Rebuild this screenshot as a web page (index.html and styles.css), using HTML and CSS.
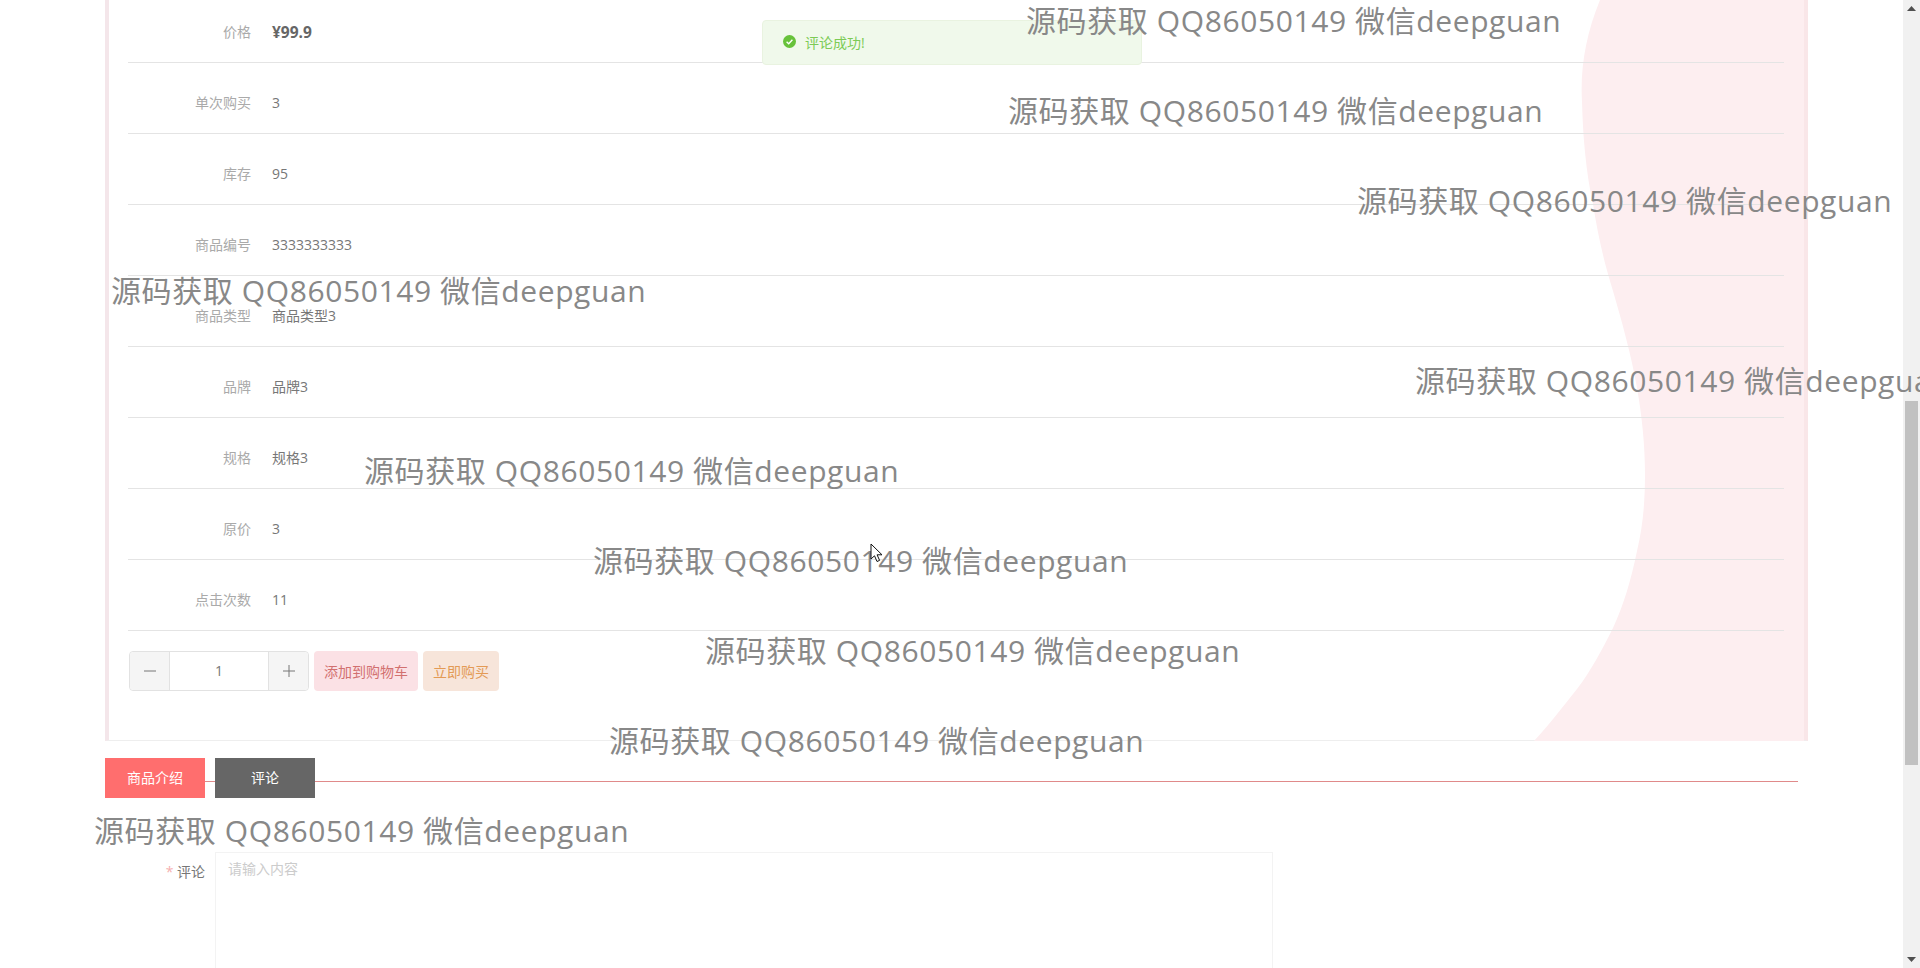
FILE: index.html
```html
<!DOCTYPE html>
<html lang="en">
<head>
    <meta charset="UTF-8">
    <title>商品详情</title>
    <link rel="stylesheet" href="styles.css">
</head>
<body>
    <div class="viewport">
        <main class="page">
            <section class="card">
                <svg class="blob" width="276" height="741" viewBox="0 0 276 741">
                    <path d="M72 0C58 34 52 68 54 102C55 138 58 172 65 204C70 236 76 262 85 291C94 322 103 354 109 388C114 416 117 446 117 474C117 502 115 526 109 551C103 580 96 604 85 628C74 650 62 672 49 689C34 708 20 726 6 741L276 741L276 0Z" fill="#fdeef0"/>
                </svg>
                <div class="row row-first"><span class="row-label">价格</span><span class="row-price">¥99.9</span></div>
                <div class="row"><span class="row-label">单次购买</span><span class="row-value">3</span></div>
                <div class="row"><span class="row-label">库存</span><span class="row-value">95</span></div>
                <div class="row"><span class="row-label">商品编号</span><span class="row-value">3333333333</span></div>
                <div class="row"><span class="row-label">商品类型</span><span class="row-value">商品类型3</span></div>
                <div class="row"><span class="row-label">品牌</span><span class="row-value">品牌3</span></div>
                <div class="row"><span class="row-label">规格</span><span class="row-value">规格3</span></div>
                <div class="row"><span class="row-label">原价</span><span class="row-value">3</span></div>
                <div class="row"><span class="row-label">点击次数</span><span class="row-value">11</span></div>
                <div class="actions">
                    <div class="stepper">
                        <span class="stepper-btn">
                            <svg width="14" height="14" viewBox="0 0 14 14"><path d="M1 7H13" stroke="#777" stroke-width="1"/></svg>
                        </span>
                        <span class="stepper-num">1</span>
                        <span class="stepper-btn stepper-plus">
                            <svg width="14" height="14" viewBox="0 0 14 14"><path d="M1 7H13M7 1V13" stroke="#777" stroke-width="1"/></svg>
                        </span>
                    </div>
                    <button class="btn btn-cart">添加到购物车</button>
                    <button class="btn btn-buy">立即购买</button>
                </div>
            </section>

            <nav class="tabs">
                <span class="tab tab-active">商品介绍</span>
                <span class="tab">评论</span>
            </nav>

            <form class="comment-form">
                <label class="comment-label"><span class="required">*</span> 评论</label>
                <textarea class="comment-input" placeholder="请输入内容"></textarea>
            </form>
        </main>

        <div class="scrollbar">
            <span class="scroll-arrow"><svg width="9" height="5" viewBox="0 0 9 5"><path d="M4.5 0L9 5H0Z" fill="#505050"/></svg></span>
            <span class="scroll-thumb"></span>
            <span class="scroll-arrow scroll-arrow-down"><svg width="9" height="5" viewBox="0 0 9 5"><path d="M0 0H9L4.5 5Z" fill="#505050"/></svg></span>
        </div>
    </div>

    <div class="toast">
        <svg width="13" height="13" viewBox="0 0 13 13">
            <circle cx="6.5" cy="6.5" r="6.5" fill="#67c23a"/>
            <path d="M3.6 6.7L5.7 8.7L9.4 4.7" fill="none" stroke="#fff" stroke-width="1.4"/>
        </svg>
        <span>评论成功!</span>
    </div>

    <span class="wm wm-1">源码获取 QQ86050149 微信deepguan</span>
    <span class="wm wm-2">源码获取 QQ86050149 微信deepguan</span>
    <span class="wm wm-3">源码获取 QQ86050149 微信deepguan</span>
    <span class="wm wm-4">源码获取 QQ86050149 微信deepguan</span>
    <span class="wm wm-5">源码获取 QQ86050149 微信deepguan</span>
    <span class="wm wm-6">源码获取 QQ86050149 微信deepguan</span>
    <span class="wm wm-7">源码获取 QQ86050149 微信deepguan</span>
    <span class="wm wm-8">源码获取 QQ86050149 微信deepguan</span>
    <span class="wm wm-9">源码获取 QQ86050149 微信deepguan</span>
    <span class="wm wm-10">源码获取 QQ86050149 微信deepguan</span>

    <svg class="cursor" width="13" height="20" viewBox="0 0 13 20">
        <path d="M1 1V16L4.5 12.8L7 18.5L9.6 17.4L7.1 11.8H12Z" fill="#fff" stroke="#111" stroke-width="1"/>
    </svg>
</body>
</html>
```

FILE: styles.css
```css
html, body {
    margin: 0;
    padding: 0;
    height: 100%;
    overflow: hidden;
    background-color: #fff;
    font-family: "Open Sans", "Noto Sans CJK SC", sans-serif;
    font-size: 14px;
    color: #666;
}

.viewport {
    display: flex;
    height: 968px;
    overflow: hidden;
}

.page {
    flex: 1;
    min-width: 0;
    padding-left: 105px;
}

/* product card */
.card {
    position: relative;
    width: 1703px;
    height: 741px;
    box-sizing: border-box;
    padding: 0 20px 0 19px;
    border-left: 4px solid #f4e6ea;
    border-right: 4px solid #f9e6e8;
    border-bottom: 1px solid #eee;
    background-color: #fff;
}

.blob {
    position: absolute;
    top: 0;
    right: 0;
}

.row {
    position: relative;
    display: flex;
    align-items: flex-end;
    gap: 21px;
    height: 71px;
    box-sizing: border-box;
    padding-bottom: 20px;
    border-bottom: 1px solid #e4e4e4;
    line-height: 20px;
}

.row-first {
    height: 63px;
}

.row-label {
    width: 123px;
    text-align: right;
    color: #aaa;
}

.row-value {
    color: #777;
}

.row-price {
    color: #666;
    font-size: 15.5px;
    font-weight: 700;
}

.actions {
    position: relative;
    display: flex;
    gap: 5px;
    margin: 20px 0 0 1px;
}

.stepper {
    display: flex;
    width: 180px;
    height: 40px;
    box-sizing: border-box;
    border: 1px solid #e2e2e2;
    border-radius: 4px;
    background-color: #fff;
}

.stepper-btn {
    display: flex;
    align-items: center;
    justify-content: center;
    width: 40px;
    box-sizing: border-box;
    background-color: #f5f5f5;
    border-right: 1px solid #e2e2e2;
    border-radius: 4px 0 0 4px;
}

.stepper-plus {
    border-right: none;
    border-left: 1px solid #e2e2e2;
    border-radius: 0 4px 4px 0;
}

.stepper-num {
    flex: 1;
    text-align: center;
    line-height: 38px;
    color: #777;
}

.btn {
    height: 40px;
    padding: 0;
    border: none;
    border-radius: 4px;
    font-family: inherit;
    font-size: 14px;
    white-space: nowrap;
}

.btn-cart {
    width: 104px;
    background-color: #fbe1e5;
    color: #d2706f;
}

.btn-buy {
    width: 76px;
    background-color: #f7e5da;
    color: #e39a55;
}

/* tabs */
.tabs {
    position: relative;
    display: flex;
    gap: 10px;
    width: 1693px;
    margin-top: 17px;
}

.tabs::before {
    content: "";
    position: absolute;
    top: 23px;
    left: 0;
    right: 0;
    height: 1px;
    background-color: #e08a8a;
}

.tab {
    position: relative;
    width: 100px;
    height: 40px;
    line-height: 40px;
    text-align: center;
    background-color: #666;
    color: #fff;
}

.tab-active {
    background-color: #ff6e6e;
}

/* comment form */
.comment-form {
    display: flex;
    gap: 10px;
    margin-top: 54px;
}

.comment-label {
    width: 100px;
    text-align: right;
    line-height: 40px;
    color: #777;
}

.required {
    color: #f5b0b0;
}

.comment-input {
    width: 1058px;
    height: 200px;
    box-sizing: border-box;
    padding: 6px 12px;
    border: 1px solid #f3f3f3;
    border-radius: 0;
    background-color: #fff;
    font-family: inherit;
    font-size: 14px;
    line-height: 20px;
    resize: none;
}

.comment-input::placeholder {
    color: #ccc;
}

/* scrollbar */
.scrollbar {
    display: flex;
    flex-direction: column;
    align-items: center;
    width: 17px;
    background-color: #f1f1f1;
}

.scroll-arrow {
    display: flex;
    align-items: center;
    justify-content: center;
    width: 17px;
    height: 17px;
}

.scroll-arrow-down {
    margin-top: auto;
}

.scroll-thumb {
    width: 13px;
    height: 364px;
    margin-top: 384px;
    background-color: #c1c1c1;
}

/* message toast */
.toast {
    position: absolute;
    top: 20px;
    left: 762px;
    display: flex;
    align-items: center;
    gap: 9px;
    width: 380px;
    height: 45px;
    box-sizing: border-box;
    padding: 0 0 2px 20px;
    border: 1px solid #e9f3e0;
    border-radius: 4px;
    background-color: #f0f9eb;
    color: #7ccb55;
}

/* watermark */
.wm {
    position: absolute;
    font-size: 30px;
    letter-spacing: 0.6px;
    line-height: 40px;
    color: #888;
    white-space: nowrap;
}

.wm-1 { left: 1026px; top: 1px; }
.wm-2 { left: 1008px; top: 91px; }
.wm-3 { left: 1357px; top: 181px; }
.wm-4 { left: 111px; top: 271px; }
.wm-5 { left: 1415px; top: 361px; }
.wm-6 { left: 364px; top: 451px; }
.wm-7 { left: 593px; top: 541px; }
.wm-8 { left: 705px; top: 631px; }
.wm-9 { left: 609px; top: 721px; }
.wm-10 { left: 94px; top: 811px; }

.cursor {
    position: absolute;
    left: 870px;
    top: 543px;
}
```
